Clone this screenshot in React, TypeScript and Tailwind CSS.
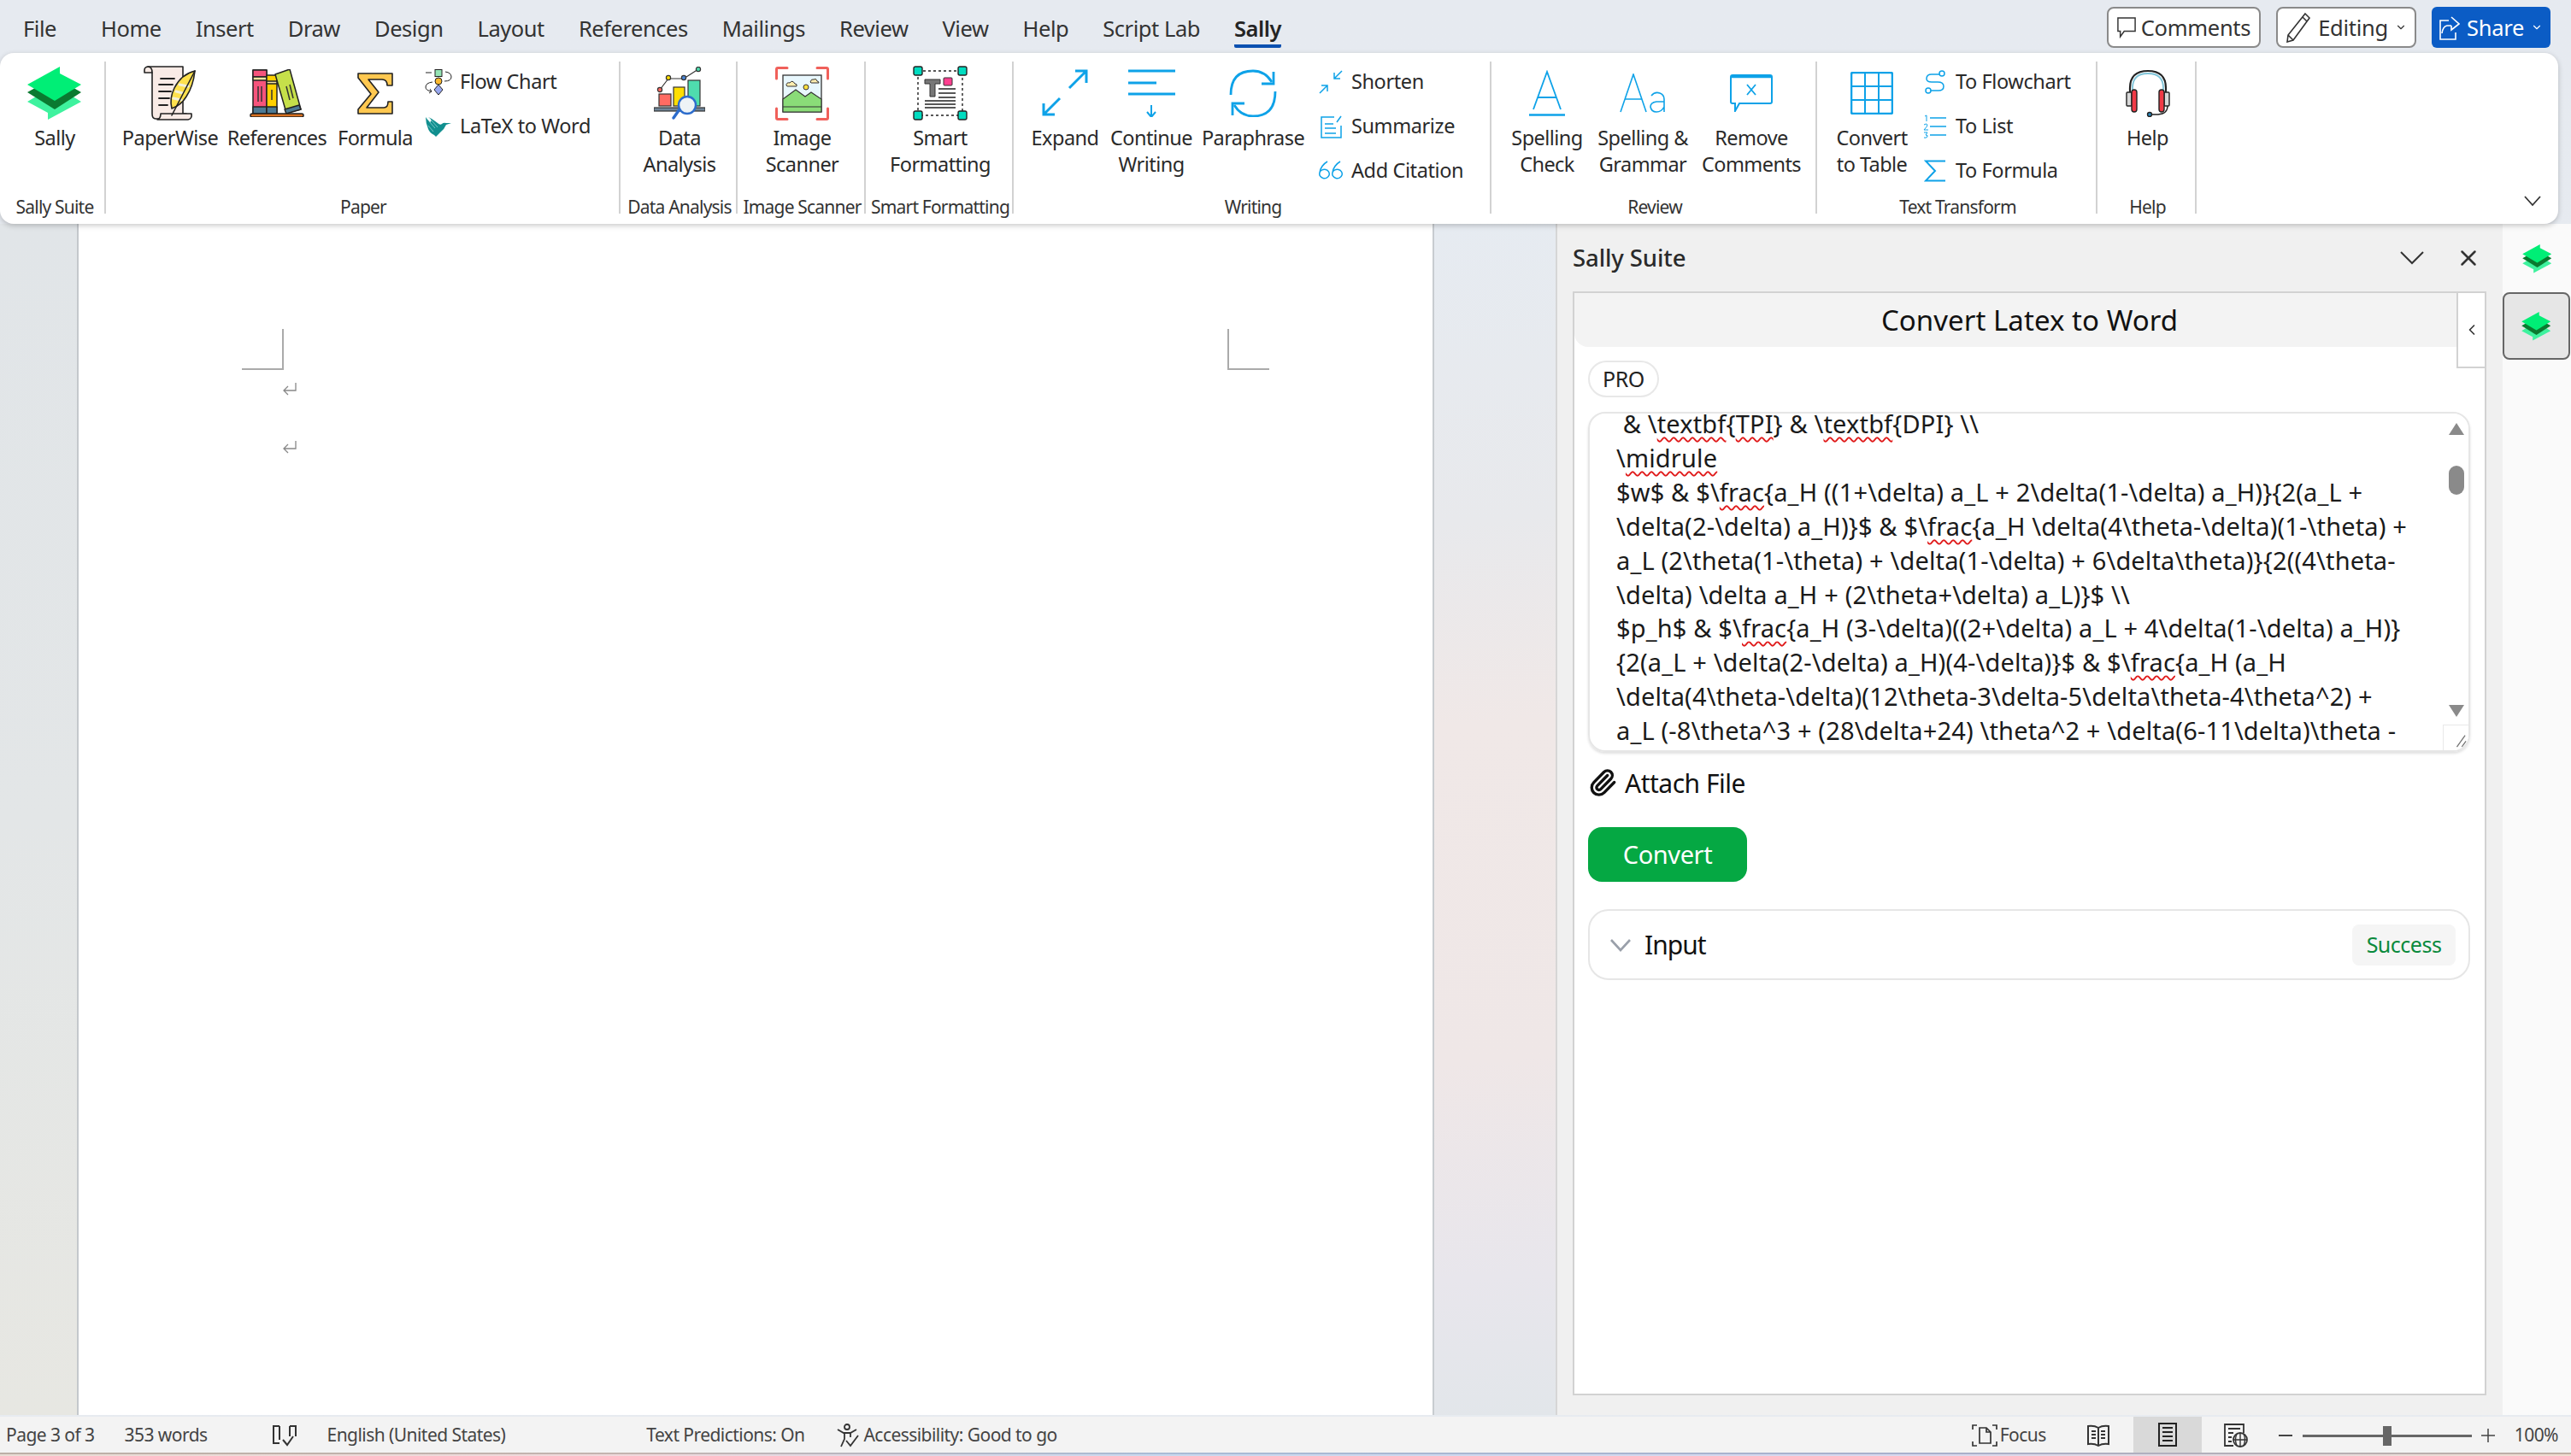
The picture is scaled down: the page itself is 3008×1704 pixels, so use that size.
import React from "react";
import { Paperclip, ChevronDown, ChevronLeft, X } from "lucide-react";

const BLUE = "#0ea2e8";

function SallyLogo({ className }: { className: string }) {
  return (
    <svg viewBox="0 0 64 63" className={className}>
      <path d="M0 41 L32 22 L63 41 L24 62 L24 54 Z" fill="#3ef29e" />
      <path d="M0 30 L32 12 L63 30 L32 50 Z" fill="#0a7a30" />
      <path d="M0 21 L38 0 L38 8 L63 21 L32 40 Z" fill="#00ee76" />
    </svg>
  );
}

function PaperWiseIcon() {
  return (
    <svg viewBox="0 0 62 64" className="w-[62px] h-[64px]" fill="none" stroke="#222" strokeWidth="1.6" strokeLinejoin="round" strokeLinecap="round">
      <path d="M6 1 H46 V56 H50 V62 H14 Q10 62 10 56 V8 H1 V5 Q1 1 6 1Z" fill="#f9ebe6" />
      <path d="M5 1 Q10 1 10 8" />
      <path d="M20 56 H56 Q57 62 52 63 H16 Q20 62 20 56Z" fill="#f9ebe6" />
      <path d="M20 15 H36 M18 22 H34 M18 30 H32 M18 38 H30 M18 46 H28" strokeWidth="1.8" />
      <path d="M60 6 Q44 10 36 26 Q30 38 33 50 Q44 46 50 36 Q58 24 60 6Z" fill="#ffe14d" />
      <path d="M38 30 L46 32 M35 38 L44 40 M42 22 L52 24" stroke="#f3f0d8" strokeWidth="3" />
      <path d="M60 6 L33 58" />
    </svg>
  );
}

function ReferencesIcon() {
  return (
    <svg viewBox="0 0 64 56" className="w-[64px] h-[56px]" stroke="#222" strokeWidth="1.5" strokeLinejoin="round">
      <rect x="4" y="1" width="16" height="51" fill="#f6547c" />
      <rect x="4" y="1" width="16" height="8" fill="#f6547c" />
      <rect x="4" y="9" width="16" height="4" fill="#f8e6a0" />
      <rect x="4" y="44" width="16" height="8" fill="#4d7a94" />
      <rect x="20" y="7" width="12" height="45" fill="#ffd000" />
      <rect x="20" y="14" width="12" height="3" fill="#f8e6a0" />
      <rect x="20" y="44" width="12" height="8" fill="#4d7a94" />
      <path d="M30 6 L47 0 L60 47 L43 51 Z" fill="#c6e04a" />
      <path d="M41 47 L58 42 L60 47 L43 52Z" fill="#4d7a94" />
      <path d="M10 20 V38 M14 20 V38 M26 24 V36 M43 20 L47 36 M47 18 L51 34" stroke="#333" strokeWidth="1.5" />
      <rect x="1" y="52" width="62" height="4" rx="2" fill="#d9701f" />
    </svg>
  );
}

function SigmaIcon() {
  return (
    <svg viewBox="0 0 44 49" className="w-[44px] h-[49px]">
      <path d="M2 1 H42 V15 H36 Q36 8 30 8 H14 L26 23 L12 41 H32 Q37 41 37 34 H42 V48 H2 V43 L17 25 L2 6Z" fill="#ffc850" stroke="#222" strokeWidth="1.6" strokeLinejoin="round" />
    </svg>
  );
}

function FlowChartIcon() {
  return (
    <svg viewBox="0 0 32 31" className="w-[32px] h-[31px]" fill="none" stroke="#222" strokeWidth="1">
      <rect x="12" y="0.5" width="8" height="8" fill="#95e5b5" />
      <circle cx="16" cy="14" r="4" fill="#fdb92e" />
      <path d="M16 18 L21 24 L16 30 L11 24Z" fill="#98a8f0" />
      <path d="M1 4 H8 M24 3 Q31 4 31 9 Q31 14 23 14 M9 15 Q1 16 1 21 Q1 25 8 26 M6 23 L8 26 L5 28" />
    </svg>
  );
}

function BirdIcon() {
  return (
    <svg viewBox="0 0 32 24" className="w-[32px] h-[24px]">
      <path d="M1 1 Q3 4 6 7 Q10 5 4 1 Q9 3 15 8 Q18 11 20 9 Q22 7 25 8 L31 8 L25 10 Q23 15 18 19 L13 24 L11 22 Q6 20 4 15 Q1 8 1 1Z" fill="#118f8f" />
      <path d="M5 6 L12 14 M8 5 L15 13 M4 11 L10 18" stroke="#8fd6d6" strokeWidth="0.8" />
    </svg>
  );
}

function DataIcon() {
  return (
    <svg viewBox="0 0 60 62" className="w-[60px] h-[62px]" stroke="#333" strokeWidth="1.2">
      <path d="M7 27 L17 14 L35 14 L52 3" fill="none" />
      <rect x="6" y="32" width="14" height="14" fill="#ff6b63" />
      <rect x="23" y="24" width="13" height="22" fill="#ffde00" />
      <rect x="40" y="16" width="14" height="30" fill="#4fdcae" />
      <circle cx="7" cy="27" r="2.6" fill="#ff6b63" />
      <circle cx="17" cy="13" r="2.6" fill="#ffde00" />
      <circle cx="35" cy="13" r="2.6" fill="#4a86d8" />
      <circle cx="52" cy="3" r="2.6" fill="#4fdcae" />
      <rect x="0" y="48" width="60" height="4" fill="#6f8598" />
      <path d="M30 50 L23 60" stroke="#2c6ccc" strokeWidth="3.4" strokeLinecap="round" />
      <circle cx="39" cy="45" r="10" fill="#eef3f6" stroke="#2c6ccc" strokeWidth="2.4" />
    </svg>
  );
}

function ImageIcon() {
  return (
    <svg viewBox="0 0 63 63" className="w-[63px] h-[63px]" fill="none">
      <path d="M1.5 14 V3 Q1.5 1.5 3 1.5 H14 M49 1.5 H60 Q61.5 1.5 61.5 3 V14 M1.5 49 V60 Q1.5 61.5 3 61.5 H14 M49 61.5 H60 Q61.5 61.5 61.5 60 V49" stroke="#f0605a" strokeWidth="3" strokeLinecap="round" />
      <rect x="9" y="10" width="45" height="43" fill="#e8f7fd" stroke="#333" strokeWidth="1.3" />
      <path d="M9 38 L24 27 L35 35 L42 30 L54 38 V53 H9Z" fill="#8adc78" stroke="#333" strokeWidth="1.1" />
      <path d="M9 47 H54" stroke="#333" strokeWidth="1.1" />
      <circle cx="36" cy="24" r="3" fill="#ffdf40" stroke="#333" />
      <path d="M13 22 Q13 18 17 19 Q20 15 23 20 Q26 20 25 23 H14Z" fill="#ffeeb0" stroke="#333" />
      <path d="M41 18 Q42 14 45 15 Q48 13 49 17 Q51 17 51 19 H42Z" fill="#ffeeb0" stroke="#333" />
    </svg>
  );
}

function SmartIcon() {
  return (
    <svg viewBox="0 0 64 64" className="w-[64px] h-[64px]" fill="none">
      <rect x="6" y="6" width="52" height="52" stroke="#222" strokeWidth="1.4" strokeDasharray="3 3" />
      <path d="M14 16 H32 V21 H26 V36 H20 V21 H14Z" fill="#777" stroke="#333" />
      <rect x="36" y="14" width="10" height="9" rx="1" fill="#ff3f8f" stroke="#333" />
      <path d="M30 27 H50 M30 32 H50 M30 37 H50 M14 41 H50 M14 45 H50 M14 49 H50" stroke="#222" strokeWidth="1.4" />
      {[[1, 1], [53, 1], [1, 53], [53, 53]].map(([x, y]) => (
        <rect key={`${x}-${y}`} x={x} y={y} width="10" height="10" rx="2" fill="#00dcc0" stroke="#222" strokeWidth="1.4" />
      ))}
    </svg>
  );
}

function ExpandIcon() {
  return (
    <svg viewBox="0 0 56 56" className="w-[56px] h-[56px]" fill="none" stroke={BLUE} strokeWidth="3">
      <path d="M33 22 L53 2 M40 2 H53 V16 M22 34 L3 53 M3 40 V53 H16" />
    </svg>
  );
}

function ContinueIcon() {
  return (
    <svg viewBox="0 0 56 56" className="w-[56px] h-[56px]" fill="none" stroke={BLUE}>
      <path d="M1 2 H56 M1 16 H34 M1 29 H56" strokeWidth="3" />
      <path d="M28 42 V56 M23 50 L28 56 L33 50" strokeWidth="2" />
    </svg>
  );
}

function ParaphraseIcon() {
  return (
    <svg viewBox="0 0 56 56" className="w-[56px] h-[56px]" fill="none" stroke={BLUE} strokeWidth="2.8">
      <path d="M2 30 Q2 2 28 2 Q42 2 50 15" />
      <path d="M52 3 V17 H38" />
      <path d="M54 26 Q54 55 28 55 Q14 55 6 42" />
      <path d="M4 54 V40 H18" />
    </svg>
  );
}

function ShortenIcon() {
  return (
    <svg viewBox="0 0 28 28" className="w-[28px] h-[28px]" fill="none" stroke={BLUE} strokeWidth="1.5">
      <path d="M27 1 L18 10 M18 3 V10 H25 M1 27 L10 18 M3 18 H10 V25" />
    </svg>
  );
}

function SummarizeIcon() {
  return (
    <svg viewBox="0 0 26 27" className="w-[26px] h-[27px]" fill="none" stroke={BLUE} strokeWidth="1.5">
      <path d="M17 2 H2 V26 H25 V12 M6 10 H16 M6 15 H19 M6 21 H19 M20 8 L25 1" />
    </svg>
  );
}

function CiteIcon() {
  return (
    <svg viewBox="0 0 28 24" className="w-[28px] h-[24px]" fill="none" stroke={BLUE} strokeWidth="1.5">
      <path d="M10 1 Q2 6 1 14 M1 14 A5.5 5 0 1 0 12 17 A5.5 5 0 0 0 1 14" />
      <path d="M25 1 Q17 6 16 14 M16 14 A5.5 5 0 1 0 27 17 A5.5 5 0 0 0 16 14" />
    </svg>
  );
}

function SpellCheckIcon() {
  return (
    <svg viewBox="0 0 44 54" className="w-[44px] h-[54px]" fill="none" stroke={BLUE} strokeWidth="1.8">
      <path d="M6 46 L22 2 L38 46 M11 32 H33" />
      <path d="M1 52.5 H43" strokeWidth="2.4" />
    </svg>
  );
}

function AaIcon() {
  return (
    <svg viewBox="0 0 54 46" className="w-[54px] h-[46px]" fill="none" stroke={BLUE} strokeWidth="1.6">
      <path d="M1 45 L16 1 L31 45 M6 30 H26" />
      <path d="M37 26 Q41 21 47 23 Q52 25 52 30 V45 M52 33 H43 Q36 34 36 39 Q37 45 43 45 Q49 45 52 39" />
    </svg>
  );
}

function RemoveIcon() {
  return (
    <svg viewBox="0 0 50 44" className="w-[50px] h-[44px]" fill="none" stroke={BLUE} strokeWidth="2">
      <path d="M3 1 H47 Q49 1 49 3 V32 Q49 34 47 34 H11 L6 43 V34 H3 Q1 34 1 32 V3 Q1 1 3 1Z" />
      <path d="M1 3 H49" strokeWidth="2.4" />
      <path d="M20 12 L30 24 M30 12 L20 24" strokeWidth="1.8" />
    </svg>
  );
}

function TableIcon() {
  return (
    <svg viewBox="0 0 50 50" className="w-[50px] h-[50px]" fill="none" stroke={BLUE} strokeWidth="2">
      <rect x="1" y="1" width="48" height="48" rx="2" strokeWidth="2.6" />
      <path d="M17 1 V49 M33 1 V49 M1 17 H49 M1 33 H49" />
    </svg>
  );
}

function ToFlowIcon() {
  return (
    <svg viewBox="0 0 26 28" className="w-[26px] h-[28px]" fill="none" stroke={BLUE} strokeWidth="1.5">
      <circle cx="21" cy="4" r="3" />
      <circle cx="5" cy="24" r="3" />
      <path d="M18 5 H9 Q3 5 3 10 Q3 14 9 14 H16 Q23 14 23 19 Q23 24 17 24 H8" />
    </svg>
  );
}

function ToListIcon() {
  return (
    <svg viewBox="0 0 28 28" className="w-[28px] h-[28px]" fill="none" stroke={BLUE}>
      <path d="M2 2 L4 1 V8 M1 12 Q4 10 5 12 Q5 14 1 18 H6 M1 21 H5 L3 24 Q6 24 5 26 Q3 28 1 27" strokeWidth="1" />
      <path d="M8 4 H27 M8 14 H27 M8 24 H27" strokeWidth="1.4" />
    </svg>
  );
}

function ToFormulaIcon() {
  return (
    <svg viewBox="0 0 26 26" className="w-[26px] h-[26px]" fill="none" stroke={BLUE} strokeWidth="2">
      <path d="M25 1.5 H2 L13 13 L2 24.5 H25" />
    </svg>
  );
}

function HelpIcon() {
  return (
    <svg viewBox="0 0 52 56" className="w-[52px] h-[56px]" fill="none" stroke="#222" strokeWidth="1.4">
      <path d="M5 28 V22 Q5 2 26 2 Q47 2 47 22 V28" strokeWidth="2.2" />
      <path d="M8 26 V22 Q8 5 26 5 Q44 5 44 22 V26" stroke="#7fc4d8" strokeWidth="1.8" />
      <rect x="1" y="27" width="6" height="16" rx="1" fill="#d8d8d8" />
      <rect x="45" y="27" width="6" height="16" rx="1" fill="#d8d8d8" />
      <rect x="7" y="24" width="6" height="26" rx="3" fill="#f03a46" />
      <rect x="39" y="24" width="6" height="26" rx="3" fill="#f03a46" />
      <path d="M49 43 Q49 52 38 53 H31" />
      <circle cx="28" cy="53" r="2.5" fill="#2a8ac0" />
    </svg>
  );
}

function BigButton({ icon, lines, className }: { icon: React.ReactNode; lines: string[]; className: string }) {
  return (
    <div className={`flex flex-col items-center shrink-0 ${className}`}>
      <div className="h-[74px] flex items-center justify-center">{icon}</div>
      {lines.map((l) => (
        <span key={l} className="text-[23.5px] leading-[31px] whitespace-nowrap tracking-[-0.55px]">{l}</span>
      ))}
    </div>
  );
}

function SmallRow({ icon, label, gap }: { icon: React.ReactNode; label: string; gap: string }) {
  return (
    <div className={`h-[48px] flex items-center ${gap}`}>
      <div className="w-[32px] flex items-center justify-center shrink-0">{icon}</div>
      <span className="text-[23.5px] whitespace-nowrap tracking-[-0.4px]">{label}</span>
    </div>
  );
}

function Group({ label, className, children }: { label: string; className: string; children: React.ReactNode }) {
  return (
    <div className={`h-[178px] flex flex-col shrink-0 border-r-2 border-[#d2d2d2] ${className}`}>
      <div className="h-[162px] flex">{children}</div>
      <div className="h-[16px] leading-[16px] text-center text-[21px] whitespace-nowrap tracking-[-0.8px] text-[#333]">{label}</div>
    </div>
  );
}

const TABS = [
  { t: "Home", c: "ml-[52px]" }, { t: "Insert", c: "ml-[40px]" }, { t: "Draw", c: "ml-[40px]" }, { t: "Design", c: "ml-[40px]" },
  { t: "Layout", c: "ml-[40px]" }, { t: "References", c: "ml-[40px]" }, { t: "Mailings", c: "ml-[40px]" }, { t: "Review", c: "ml-[40px]" },
  { t: "View", c: "ml-[40px]" }, { t: "Help", c: "ml-[40px]" }, { t: "Script Lab", c: "ml-[40px]" },
];

function TabBar() {
  return (
    <div className="h-[62px] flex shrink-0 pl-[27px] pr-[24px] text-[#333] text-[25.5px]">
      <span className="h-[62px] leading-[66px] tracking-[-0.45px]">File</span>
      {TABS.map((x) => (
        <span key={x.t} className={`h-[62px] leading-[66px] whitespace-nowrap tracking-[-0.45px] ${x.c}`}>{x.t}</span>
      ))}
      <span className="ml-[40px] h-[56px] leading-[66px] font-semibold text-[#242424] border-b-[4px] border-[#0a50b0] rounded-b-[2px] tracking-[-0.45px]">Sally</span>
      <div className="ml-auto flex gap-[18px] pt-[8px] tracking-[-0.3px]">
        <div className="h-[48px] w-[180px] rounded-[8px] border-2 border-[#8a8a8a] bg-white flex items-center justify-center gap-[6px] text-[#333]">
          <svg viewBox="0 0 24 28" className="w-[22px] h-[26px]" fill="none" stroke="#333" strokeWidth="1.6"><path d="M1 2 H23 V19 H9 L4 26 V19 H1Z" /></svg>
          <span>Comments</span>
        </div>
        <div className="h-[48px] w-[164px] rounded-[8px] border-2 border-[#8a8a8a] bg-white flex items-center justify-center gap-[8px] text-[#333]">
          <svg viewBox="0 0 30 36" className="w-[30px] h-[36px]" fill="none" stroke="#333" strokeWidth="1.6"><path d="M23 2 L28 7 L9 33 L2 35 L3 27Z M20 6 L25 11 M3 27 L9 33" /></svg>
          <span>Editing</span>
          <ChevronDown size={14} strokeWidth={2} />
        </div>
        <div className="h-[48px] w-[139px] rounded-[6px] bg-[#0b5cc5] flex items-center justify-center gap-[8px] text-white">
          <svg viewBox="0 0 24 30" className="w-[24px] h-[30px]" fill="none" stroke="#fff" strokeWidth="1.6"><path d="M14 13 H9 Q4 14 3 22 M14 3 L23 11 L14 18 V13 M11 7 H1 V29 H19 V21" /></svg>
          <span>Share</span>
          <ChevronDown size={14} strokeWidth={2} />
        </div>
      </div>
    </div>
  );
}

function Ribbon() {
  return (
    <div className="relative z-10 h-[200px] w-[2993px] shrink-0 bg-white rounded-[16px] shadow-[0_2px_6px_rgba(0,0,0,0.22)] pt-[10px] flex text-[#2a2a2a]">
      <Group label="Sally Suite" className="w-[124px] pl-[6px]">
        <BigButton className="w-full" icon={<SallyLogo className="w-[64px] h-[63px]" />} lines={["Sally"]} />
      </Group>
      <Group label="Paper" className="w-[602px] pl-[2px]">
        <BigButton className="w-[146px]" icon={<PaperWiseIcon />} lines={["PaperWise"]} />
        <BigButton className="w-[104px]" icon={<ReferencesIcon />} lines={["References"]} />
        <BigButton className="w-[126px]" icon={<SigmaIcon />} lines={["Formula"]} />
        <div className="flex flex-col gap-[4px] -ml-[5px]">
          <SmallRow gap="gap-[9px]" icon={<FlowChartIcon />} label="Flow Chart" />
          <SmallRow gap="gap-[9px]" icon={<BirdIcon />} label="LaTeX to Word" />
        </div>
      </Group>
      <Group label="Data Analysis" className="w-[137px] pl-[3px]">
        <BigButton className="w-full" icon={<DataIcon />} lines={["Data", "Analysis"]} />
      </Group>
      <Group label="Image Scanner" className="w-[150px] pl-[3px]">
        <BigButton className="w-full" icon={<ImageIcon />} lines={["Image", "Scanner"]} />
      </Group>
      <Group label="Smart Formatting" className="w-[173px] pl-[3px]">
        <BigButton className="w-full" icon={<SmartIcon />} lines={["Smart", "Formatting"]} />
      </Group>
      <Group label="Writing" className="w-[559px] pl-[3px]">
        <BigButton className="w-[114px]" icon={<ExpandIcon />} lines={["Expand"]} />
        <BigButton className="w-[88px]" icon={<ContinueIcon />} lines={["Continue", "Writing"]} />
        <BigButton className="w-[150px]" icon={<ParaphraseIcon />} lines={["Paraphrase"]} />
        <div className="flex flex-col gap-[4px]">
          <SmallRow gap="gap-[8px]" icon={<ShortenIcon />} label="Shorten" />
          <SmallRow gap="gap-[8px]" icon={<SummarizeIcon />} label="Summarize" />
          <SmallRow gap="gap-[8px]" icon={<CiteIcon />} label="Add Citation" />
        </div>
      </Group>
      <Group label="Review" className="w-[381px] pl-[3px]">
        <BigButton className="w-[124px]" icon={<SpellCheckIcon />} lines={["Spelling", "Check"]} />
        <BigButton className="w-[100px]" icon={<AaIcon />} lines={["Spelling &", "Grammar"]} />
        <BigButton className="w-[154px]" icon={<RemoveIcon />} lines={["Remove", "Comments"]} />
      </Group>
      <Group label="Text Transform" className="w-[328px] pl-[3px]">
        <BigButton className="w-[122px]" icon={<TableIcon />} lines={["Convert", "to Table"]} />
        <div className="flex flex-col gap-[4px] -ml-[3px]">
          <SmallRow gap="gap-[8px]" icon={<ToFlowIcon />} label="To Flowchart" />
          <SmallRow gap="gap-[8px]" icon={<ToListIcon />} label="To List" />
          <SmallRow gap="gap-[8px]" icon={<ToFormulaIcon />} label="To Formula" />
        </div>
      </Group>
      <Group label="Help" className="w-[116px] pl-[3px]">
        <BigButton className="w-full" icon={<HelpIcon />} lines={["Help"]} />
      </Group>
      <svg viewBox="0 0 22 14" className="w-[22px] h-[14px] ml-auto self-end mr-[19px] mb-[20px]" fill="none" stroke="#333" strokeWidth="1.8"><path d="M2 2 L11 12 L20 2" /></svg>
    </div>
  );
}

function ReturnMark() {
  return (
    <svg viewBox="0 0 16 15" className="w-[16px] h-[15px] ml-[48px]" fill="none" stroke="#888" strokeWidth="1.3">
      <path d="M15 0 V9 H1 M6 4 L1 9 L6 14" />
    </svg>
  );
}

function Page() {
  return (
    <div className="w-[1584px] h-full bg-white px-[191px] pt-[123px] shrink-0">
      <div className="flex justify-between">
        <div className="w-[49px] h-[48px] border-r-2 border-b-2 border-[#aaaaaa]" />
        <div className="w-[49px] h-[48px] border-l-2 border-b-2 border-[#aaaaaa]" />
      </div>
      <div className="mt-[15px]"><ReturnMark /></div>
      <div className="mt-[53px]"><ReturnMark /></div>
    </div>
  );
}

function W({ children }: { children: React.ReactNode }) {
  return <span className="underline decoration-wavy decoration-[#e01b1b] decoration-[2px] underline-offset-[4px]">{children}</span>;
}

function CodeLines() {
  return (
    <div className="-mt-[8px] pl-[31px] text-[29px] leading-[39.9px] text-[#1a1a1a] whitespace-pre tracking-[0.15px]">
      <div>{" & \\"}<W>textbf</W>{"{"}<W>TPI</W>{"} & \\"}<W>textbf</W>{"{DPI} \\\\"}</div>
      <div>{"\\"}<W>midrule</W></div>
      <div>{"$w$ & $\\"}<W>frac</W>{"{a_H ((1+\\delta) a_L + 2\\delta(1-\\delta) a_H)}{2(a_L +"}</div>
      <div>{"\\delta(2-\\delta) a_H)}$ & $\\"}<W>frac</W>{"{a_H \\delta(4\\theta-\\delta)(1-\\theta) +"}</div>
      <div>{"a_L (2\\theta(1-\\theta) + \\delta(1-\\delta) + 6\\delta\\theta)}{2((4\\theta-"}</div>
      <div>{"\\delta) \\delta a_H + (2\\theta+\\delta) a_L)}$ \\\\"}</div>
      <div>{"$p_h$ & $\\"}<W>frac</W>{"{a_H (3-\\delta)((2+\\delta) a_L + 4\\delta(1-\\delta) a_H)}"}</div>
      <div>{"{2(a_L + \\delta(2-\\delta) a_H)(4-\\delta)}$ & $\\"}<W>frac</W>{"{a_H (a_H"}</div>
      <div>{"\\delta(4\\theta-\\delta)(12\\theta-3\\delta-5\\delta\\theta-4\\theta^2) +"}</div>
      <div>{"a_L (-8\\theta^3 + (28\\delta+24) \\theta^2 + \\delta(6-11\\delta)\\theta -"}</div>
    </div>
  );
}

function Panel() {
  return (
    <div className="w-[1108px] h-full shrink-0 bg-[#f0f0f0] border-l-2 border-[#d6d6d6] pl-[18px] pr-[19px] pb-[23px] flex flex-col">
      <div className="h-[79px] flex items-center shrink-0">
        <span className="text-[27.5px] font-medium text-[#2a2a2a] tracking-[-0.1px]">Sally Suite</span>
        <svg viewBox="0 0 28 16" className="w-[28px] h-[16px] ml-auto" fill="none" stroke="#333" strokeWidth="2"><path d="M1 1 L14 14 L27 1" /></svg>
        <X size={30} strokeWidth={2} color="#333" className="ml-[37px] mr-[6px]" />
      </div>
      <div className="relative flex-1 bg-white border-2 border-[#d2d2d2] flex flex-col min-h-0">
        <div className="h-[63px] shrink-0 bg-[#f3f3f3] rounded-bl-[16px] flex items-center justify-center text-[33px] text-[#111] tracking-[0.05px]">
          Convert Latex to Word
        </div>
        <div className="absolute right-0 top-0 w-[33px] h-[88px] bg-white border-l-2 border-b-2 border-[#d2d2d2] flex items-center justify-center">
          <ChevronLeft size={20} strokeWidth={2} color="#333" />
        </div>
        <div className="pl-[16px] pr-[17px] flex flex-col">
          <div className="mt-[16px] w-[83px] h-[43px] rounded-full border-2 border-[#e8e8e8] flex items-center justify-center text-[25px] text-[#222] tracking-[-0.4px]">PRO</div>
          <div className="relative mt-[17px] w-[1032px] h-[398px] rounded-[20px] border-2 border-[#e6e6e6] shadow-[0_2px_3px_rgba(0,0,0,0.12)] overflow-hidden">
            <CodeLines />
            <div className="absolute right-0 top-0 bottom-0 w-[28px] bg-white flex flex-col items-center">
              <svg viewBox="0 0 18 14" className="w-[18px] h-[14px] mt-[11px]"><path d="M9 0 L18 14 H0Z" fill="#8a8a8a" /></svg>
              <div className="w-[18px] h-[34px] mt-[36px] rounded-full bg-[#8a8a8a]" />
              <svg viewBox="0 0 18 14" className="w-[18px] h-[14px] mt-[246px]"><path d="M0 0 H18 L9 14Z" fill="#8a8a8a" /></svg>
            </div>
            <div className="absolute right-0 bottom-0 w-[30px] h-[30px] bg-white border-l border-t border-[#e8e8e8]">
              <svg viewBox="0 0 30 30" className="w-full h-full" fill="none" stroke="#777" strokeWidth="1.4"><path d="M16 26 L26 12 M22 26 L27 19" /></svg>
            </div>
          </div>
          <div className="mt-[12px] h-[48px] flex items-center text-[30px] text-[#111] tracking-[-0.5px]">
            <Paperclip size={34} strokeWidth={2.4} color="#111" />
            <span className="ml-[9px]">Attach File</span>
          </div>
          <div className="mt-[28px] w-[186px] h-[64px] rounded-[16px] bg-[#05a843] text-white text-[29px] flex items-center justify-center tracking-[-0.4px]">Convert</div>
          <div className="mt-[32px] w-[1032px] h-[83px] rounded-[24px] border-2 border-[#e6e6e6] flex items-center pl-[24px] pr-[15px] text-[30px] text-[#111]">
            <svg viewBox="0 0 24 16" className="w-[24px] h-[16px]" fill="none" stroke="#9aa0aa" strokeWidth="2.6"><path d="M1 2 L12 14 L23 2" /></svg>
            <span className="ml-[16px] tracking-[-1px]">Input</span>
            <span className="ml-auto w-[121px] h-[48px] rounded-[8px] bg-[#f5f5f5] text-[#0a8a3c] text-[25px] flex items-center justify-center tracking-[-0.5px]">Success</span>
          </div>
        </div>
      </div>
    </div>
  );
}

function Rail() {
  return (
    <div className="flex-1 h-full bg-[#fafafa] flex flex-col items-center pt-[24px]">
      <SallyLogo className="w-[35px] h-[34px]" />
      <div className="mt-[22px] w-[79px] h-[79px] self-start rounded-[8px] border-2 border-[#666] bg-[#e6e6e6] flex items-center justify-center">
        <SallyLogo className="w-[35px] h-[34px]" />
      </div>
    </div>
  );
}

function StatusBar() {
  return (
    <div className="h-[42px] mt-[2px] pt-[2px] shrink-0 bg-[#f3f3f3] flex items-center text-[#444] text-[21px] tracking-[-0.55px] whitespace-nowrap">
      <span className="ml-[7px]">Page 3 of 3</span>
      <span className="ml-[35px]">353 words</span>
      <svg viewBox="0 0 28 26" className="w-[28px] h-[26px] ml-[76px]" fill="none" stroke="#333" strokeWidth="2"><path d="M8 2 H1 V22 H8 M20 2 H27 V14 M8 2 V18 M20 2 V14 M12 18 L17 24 L24 14" /></svg>
      <span className="ml-[36px]">English (United States)</span>
      <span className="ml-[165px]">Text Predictions: On</span>
      <svg viewBox="0 0 30 28" className="w-[30px] h-[28px] ml-[36px]" fill="none" stroke="#333" strokeWidth="1.8"><circle cx="13" cy="4" r="3" /><path d="M2 7 L9 11 H17 L24 7 M10 11 V18 L6 27 M17 11 V16 M12 20 L17 26 L26 14" /></svg>
      <span className="ml-[3px]">Accessibility: Good to go</span>
      <svg viewBox="0 0 30 28" className="w-[30px] h-[28px] ml-auto" fill="none" stroke="#333" strokeWidth="1.7"><path d="M1 7 V2 H6 M24 2 H29 V7 M1 21 V26 H6 M24 26 H29 V21 M9 23 V5 H17 L22 10 V23Z M17 5 V10 H22" /></svg>
      <span className="ml-[3px]">Focus</span>
      <svg viewBox="0 0 26 26" className="w-[26px] h-[26px] ml-[48px]" fill="none" stroke="#333" strokeWidth="2"><path d="M13 4 Q8 1 1 2 V23 Q8 22 13 25 Q18 22 25 23 V2 Q18 1 13 4Z M13 4 V25 M5 8 H10 M5 12 H10 M5 16 H10 M16 8 H21 M16 12 H21 M16 16 H21" /></svg>
      <div className="ml-[28px] -mt-[2px] w-[80px] h-[42px] bg-[#d9d9d9] flex items-center justify-center">
        <svg viewBox="0 0 22 28" className="w-[22px] h-[28px]" fill="none" stroke="#222" strokeWidth="2"><path d="M1 1 H21 V27 H1Z M5 6 H17 M5 11 H17 M5 16 H17 M5 21 H17" /></svg>
      </div>
      <svg viewBox="0 0 30 28" className="w-[30px] h-[28px] ml-[25px]" fill="none" stroke="#333" strokeWidth="1.8"><path d="M12 26 H2 V1 H24 V11 M6 6 H20 M6 11 H12 M6 16 H10 M6 21 H10" /><circle cx="20" cy="19" r="8" /><path d="M12 19 H28 M20 11 V27 M16 12 Q13 19 16 26 M24 12 Q27 19 24 26" strokeWidth="1.4" /></svg>
      <div className="ml-[35px] w-[16px] h-[2px] bg-[#444]" />
      <div className="ml-[12px] w-[198px] h-[3px] bg-[#666] relative">
        <div className="absolute left-[94px] -top-[10px] w-[10px] h-[23px] bg-[#666]" />
      </div>
      <svg viewBox="0 0 16 16" className="w-[16px] h-[16px] ml-[11px]" fill="none" stroke="#444" strokeWidth="1.5"><path d="M8 0 V16 M0 8 H16" /></svg>
      <span className="ml-[23px] mr-[15px] text-[21px]">100%</span>
    </div>
  );
}

export default function App() {
  return (
    <div className="w-[3008px] h-[1704px] overflow-hidden flex flex-col font-['Noto_Sans','Liberation_Sans',sans-serif] bg-[linear-gradient(180deg,#e6eaf0_0%,#e7ebf0_100%)]">
      <TabBar />
      <Ribbon />
      <div className="flex h-[1394px] shrink-0 bg-white">
        <div className="w-[92px] h-full shrink-0 border-r-2 border-[#c4c8cc] bg-[linear-gradient(180deg,#e1e5e8_0%,#e3e6e7_50%,#e7e7e2_100%)]" />
        <Page />
        <div className="w-[144px] h-full shrink-0 border-l-2 border-[#c8ccd0] bg-[linear-gradient(175deg,#e6ebf1_0%,#e8e9ec_25%,#f0e8e7_42%,#efe7e7_70%,#e8e6ec_88%,#e2e6ea_100%)]" />
        <Panel />
        <Rail />
      </div>
      <StatusBar />
      <div className="h-[2px] shrink-0 bg-[linear-gradient(90deg,#bcb0a6_0%,#c4b4b0_25%,#a9bcd6_45%,#a8b0cc_75%,#c0b0a4_100%)]" />
      <div className="h-[2px] shrink-0 bg-[linear-gradient(90deg,#e8dcd4_0%,#f0d8dc_25%,#c8d8ee_45%,#d8d8ee_75%,#f0dcd0_100%)]" />
    </div>
  );
}
